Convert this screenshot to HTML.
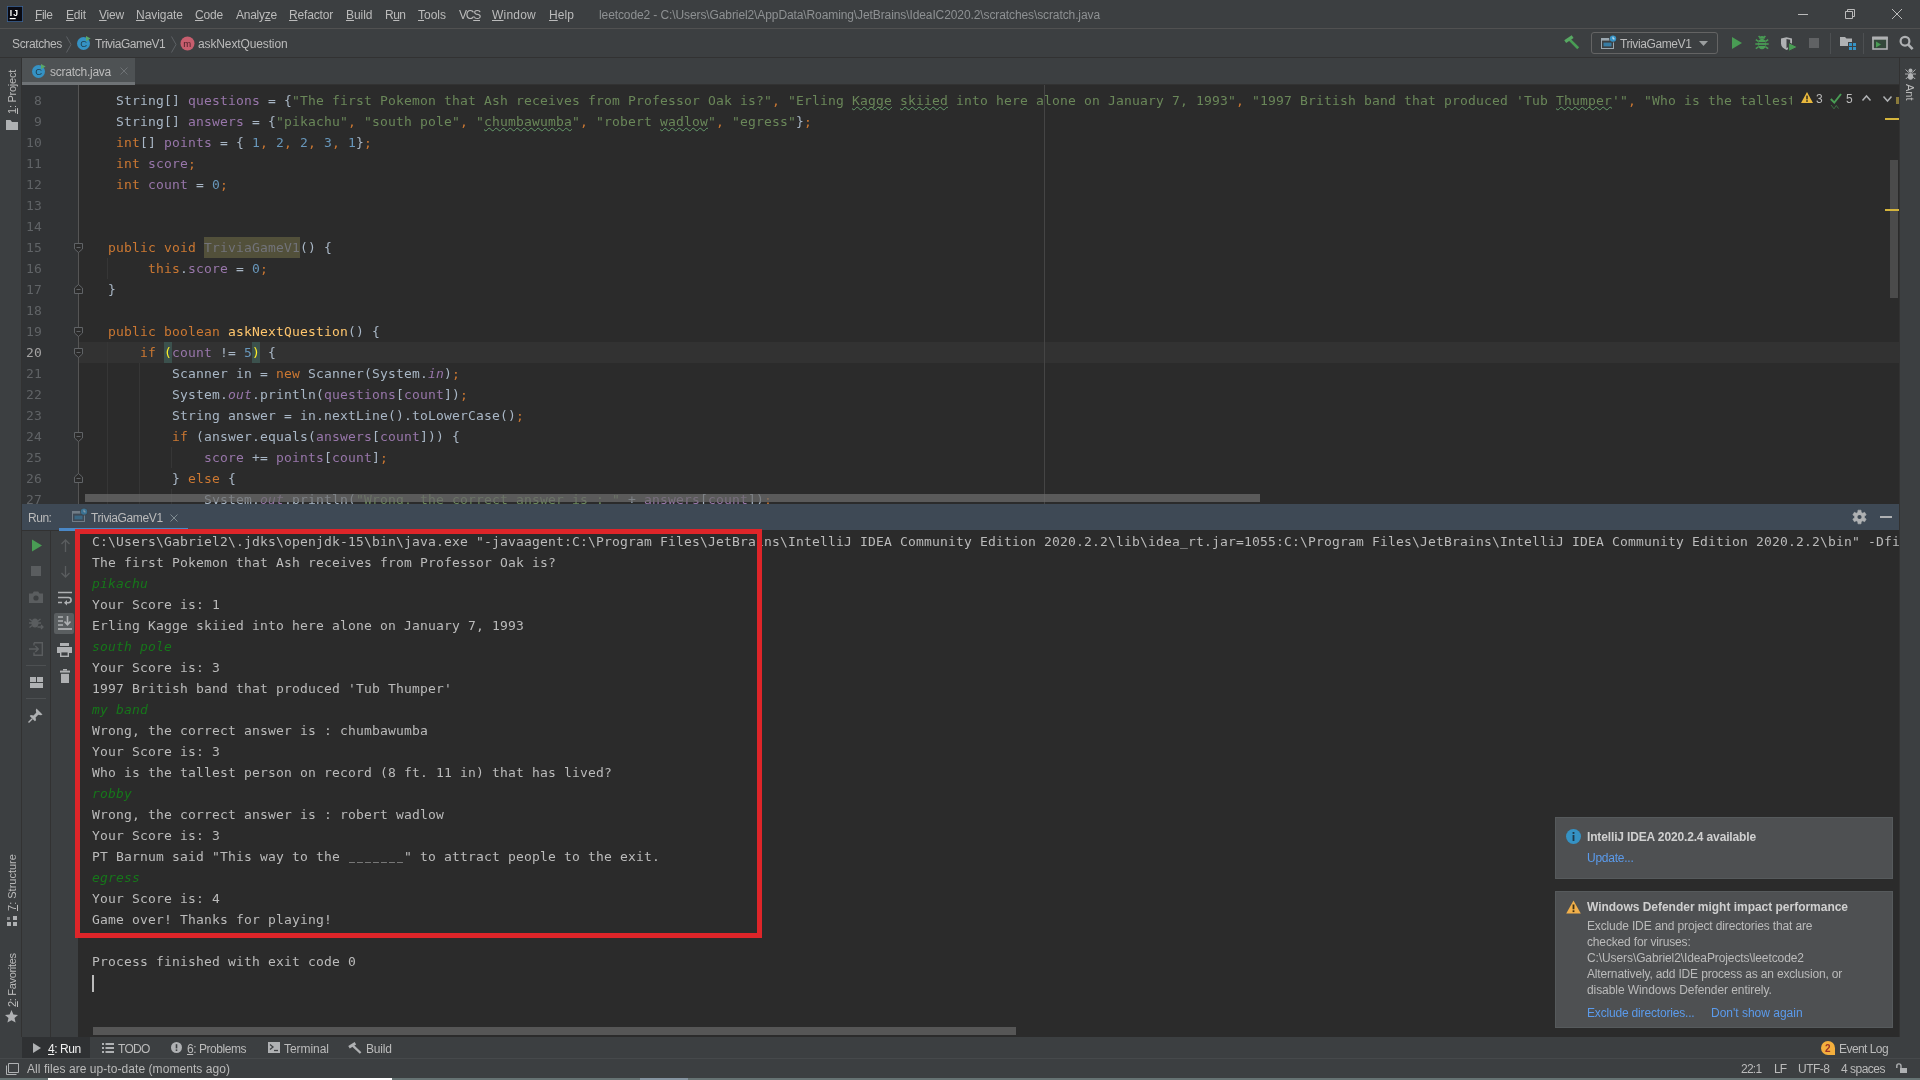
<!DOCTYPE html>
<html lang="en">
<head>
<meta charset="utf-8">
<title>leetcode2 - scratch.java</title>
<style>
*{box-sizing:border-box;margin:0;padding:0}
html,body{width:1920px;height:1080px;overflow:hidden;background:#3c3f41}
body{position:relative;font-family:"Liberation Sans",sans-serif;font-size:12px;color:#bbbbbb;-webkit-font-smoothing:antialiased}
.abs{position:absolute}
.t,.vt,.mono,svg{will-change:transform}
.t{position:absolute;white-space:pre;line-height:16px;height:16px}
u{text-decoration:underline;text-underline-offset:1px}
svg{position:absolute;overflow:visible}
/* ---------- top bars ---------- */
#menubar{position:absolute;left:0;top:0;width:1920px;height:29px;background:#3c3f41;border-bottom:1px solid #515151}
#navbar{position:absolute;left:0;top:29px;width:1920px;height:29px;background:#3c3f41;border-bottom:1px solid #323232}
#menubar .t{top:7px;font-size:12px;color:#bbbbbb}
#navbar .t{top:7px;font-size:12px;color:#bbbbbb}
/* ---------- stripes ---------- */
#lstripe{position:absolute;left:0;top:58px;width:22px;height:979px;background:#3c3f41;border-right:1px solid #323232}
#rstripe{position:absolute;left:1899px;top:58px;width:21px;height:979px;background:#3c3f41;border-left:1px solid #323232}
.vt{position:absolute;white-space:pre;font-size:11px;color:#bbbbbb;transform-origin:0 0;line-height:14px}
/* ---------- editor ---------- */
#tabs{position:absolute;left:22px;top:58px;width:1877px;height:27px;background:#3c3f41;border-bottom:1px solid #323232}
#tab1{position:absolute;left:0;top:0;width:113px;height:27px;background:#4e5254;border-bottom:3px solid #6f7376}
#editor{position:absolute;left:22px;top:85px;width:1877px;height:419px;background:#2b2b2b;overflow:hidden}
#gutter{position:absolute;left:0;top:0;width:57px;height:419px;background:#313335;border-right:1px solid #555555}
.mono{font-family:"DejaVu Sans Mono","Liberation Mono",monospace;font-size:13px;letter-spacing:0.1733px;line-height:21px;white-space:pre}
.ln{position:absolute;left:0;width:20px;text-align:right;color:#606366;height:21px}
.cl{position:absolute;left:54px;height:21px;color:#a9b7c6}
.k{color:#cc7832}.s{color:#6a8759}.n{color:#6897bb}.f{color:#9876aa}.m{color:#ffc66d}.i{color:#9876aa;font-style:italic}
.un{color:#72737a;background:#52503a;display:inline-block;height:21px;vertical-align:top}
.br{color:#ffef28;background:#3b514d;display:inline-block;height:21px;vertical-align:top}
.w{text-decoration-skip-ink:none;text-decoration:underline wavy #659c6b;text-decoration-thickness:1px;text-underline-offset:0.5px}
/* ---------- run panel ---------- */
#runhdr{position:absolute;left:22px;top:504px;width:1877px;height:26px;background:#3e4955}
#runtb1{position:absolute;left:22px;top:530px;width:29px;height:507px;background:#3c3f41;border-right:1px solid #323232}
#runtb2{position:absolute;left:51px;top:530px;width:27px;height:507px;background:#3c3f41}
#console{position:absolute;left:78px;top:530px;width:1821px;height:507px;background:#2b2b2b;overflow:hidden}
.co{position:absolute;left:14px;margin-top:-0.5px;height:21px;color:#bbbbbb}
.us{display:inline-block;width:8px;transform:scaleX(.76) translateY(-1.5px);letter-spacing:0}
.ui{color:#16771a;font-style:italic}
/* ---------- bottom ---------- */
#btabs{position:absolute;left:0;top:1037px;width:1920px;height:21px;background:#3c3f41}
#status{position:absolute;left:0;top:1058px;width:1920px;height:22px;background:#3c3f41;border-top:1px solid #46494b}
#btabs .t{top:4px}
#status .t{top:2px}
/* ---------- notifications ---------- */
.note{position:absolute;background:#4e5052;border:1px solid #565a5c}
.note .t{font-size:12px}
.lnk{color:#5b9bec}
#redbox{z-index:5;position:absolute;left:75px;top:529px;width:687px;height:409px;border:5px solid #de2529}
</style>
</head>
<body>
<div id="menubar">
<svg style="left:7px;top:6px" width="16" height="16" viewBox="0 0 16 16"><rect x="0" y="0" width="16" height="16" fill="#3e6496"/><rect x="0.8" y="0.8" width="14.4" height="14.4" fill="#0a0a12"/><rect x="2.7" y="12" width="6" height="1.2" fill="#fff"/><text x="2.7" y="9.7" font-family="Liberation Sans,sans-serif" font-weight="bold" font-size="8.6" letter-spacing="1.2" fill="#fff">IJ</text></svg>
<span class="t" style="letter-spacing:-0.465px;left:35px"><u>F</u>ile</span>
<span class="t" style="letter-spacing:-0.176px;left:66px"><u>E</u>dit</span>
<span class="t" style="letter-spacing:-0.203px;left:99px"><u>V</u>iew</span>
<span class="t" style="letter-spacing:-0.047px;left:136px"><u>N</u>avigate</span>
<span class="t" style="letter-spacing:-0.176px;left:195px"><u>C</u>ode</span>
<span class="t" style="letter-spacing:-0.246px;left:236px">Analy<u>z</u>e</span>
<span class="t" style="letter-spacing:-0.17px;left:289px"><u>R</u>efactor</span>
<span class="t" style="letter-spacing:-0.041px;left:346px"><u>B</u>uild</span>
<span class="t" style="letter-spacing:-0.516px;left:385px">R<u>u</u>n</span>
<span class="t" style="letter-spacing:-0.003px;left:418px"><u>T</u>ools</span>
<span class="t" style="letter-spacing:-1.229px;left:459px">VC<u>S</u></span>
<span class="t" style="letter-spacing:0.219px;left:492px"><u>W</u>indow</span>
<span class="t" style="letter-spacing:0.078px;left:549px"><u>H</u>elp</span>
<span class="t" id="title" style="letter-spacing:-0.102px;left:599px;color:#8e9193">leetcode2 - C:\Users\Gabriel2\AppData\Roaming\JetBrains\IdeaIC2020.2\scratches\scratch.java</span>
<svg style="left:1798px;top:9px" width="10" height="10" viewBox="0 0 10 10"><path d="M0 5.5H10" stroke="#bbb" stroke-width="1" fill="none"/></svg>
<svg style="left:1845px;top:9px" width="10" height="10" viewBox="0 0 10 10"><path d="M0.5 2.5H7.5V9.5H0.5ZM2.5 2.5V0.5H9.5V7.5H7.5" stroke="#bbb" stroke-width="1" fill="none"/></svg>
<svg style="left:1892px;top:9px" width="10" height="10" viewBox="0 0 10 10"><path d="M0 0L10 10M10 0L0 10" stroke="#bbb" stroke-width="1" fill="none"/></svg>
</div>
<div id="navbar">
<span class="t" style="letter-spacing:-0.373px;left:12px">Scratches</span>
<svg style="left:66px;top:7px" width="6" height="17" viewBox="0 0 6 17"><path d="M0.5 0.5L5 8.5L0.5 16.5" stroke="#5e6265" stroke-width="1" fill="none"/></svg>
<svg style="left:76px;top:6px" width="16" height="16" viewBox="0 0 16 16"><circle cx="7.5" cy="8.5" r="6.5" fill="#3592c4"/><text x="4.2" y="12" font-family="Liberation Sans,sans-serif" font-size="9.5" fill="#1d3a4a">C</text><path d="M10 1L14.6 3.6L10 6.2Z" fill="#59a869"/></svg>
<span class="t" style="letter-spacing:-0.496px;left:95px">TriviaGameV1</span>
<svg style="left:171px;top:7px" width="6" height="17" viewBox="0 0 6 17"><path d="M0.5 0.5L5 8.5L0.5 16.5" stroke="#5e6265" stroke-width="1" fill="none"/></svg>
<svg style="left:180px;top:7px" width="15" height="15" viewBox="0 0 15 15"><circle cx="7.5" cy="7.5" r="7" fill="#c75e6e"/><text x="3.3" y="10.6" font-family="Liberation Sans,sans-serif" font-size="9.5" fill="#4a1e27">m</text></svg>
<span class="t" style="letter-spacing:-0.126px;left:198px">askNextQuestion</span>
<!-- right toolbar -->
<svg style="left:1564px;top:6px" width="16" height="16" viewBox="0 0 16 16"><path d="M5.6 4.6L14.2 13.2" stroke="#499c54" stroke-width="2.7" fill="none"/><path d="M1.2 6.6L8.6 1.6" stroke="#57a862" stroke-width="3.4" fill="none"/></svg>
<div class="abs" style="left:1591px;top:3px;width:127px;height:22px;border:1px solid #646464;border-radius:3px"></div>
<svg style="left:1601px;top:6px" width="17" height="16" viewBox="0 0 17 16"><rect x="0.5" y="3.5" width="12" height="10" fill="none" stroke="#9aa7b0"/><rect x="0" y="3" width="13" height="2.6" fill="#9aa7b0"/><rect x="2.5" y="7.6" width="8" height="3.8" fill="#3592c4" opacity=".75"/><circle cx="12" cy="3.6" r="3.9" fill="#3c3f41"/><circle cx="12" cy="3.6" r="3.2" fill="#3592c4"/><path d="M12 1.7V3.9H13.6" stroke="#e8f2fa" stroke-width="0.9" fill="none"/></svg>
<span class="t" style="letter-spacing:-0.396px;left:1620px">TriviaGameV1</span>
<svg style="left:1699px;top:12px" width="9" height="5" viewBox="0 0 9 5"><path d="M0 0H9L4.5 5Z" fill="#9b9e9f"/></svg>
<svg style="left:1731px;top:7px" width="12" height="14" viewBox="0 0 12 14"><path d="M1 1L11 7L1 13Z" fill="#499c54"/></svg>
<svg style="left:1755px;top:6px" width="14" height="15" viewBox="0 0 14 15"><ellipse cx="7" cy="9" rx="4.2" ry="5.2" fill="#499c54"/><path d="M4.2 3.8A2.8 2.8 0 0 1 9.8 3.8Z" fill="#499c54"/><path d="M0.8 4.6L3.4 6.4M13.2 4.6L10.6 6.4M0.3 9H3M13.7 9H11M0.8 13.6L3.4 11.8M13.2 13.6L10.6 11.8M3.6 1L5 2.6M10.4 1L9 2.6" stroke="#499c54" stroke-width="1.5" fill="none"/><path d="M3.5 7.6H10.5M3.5 10.4H10.5" stroke="#3c3f41" stroke-width="1"/></svg>
<svg style="left:1780px;top:8px" width="18" height="15" viewBox="0 0 18 15"><path d="M1 1.6L6.5 0.3L12 1.6V6.5C12 9.6 9.5 11.6 6.5 13C3.5 11.6 1 9.6 1 6.5Z" fill="#afb1b3"/><path d="M6.5 1.9L10.2 2.8V6.5C10.2 8.6 8.6 10.2 6.5 11.2Z" fill="#3c3f41"/><path d="M8.6 5.6L17.6 10L8.6 14.4Z" fill="#499c54" stroke="#3c3f41" stroke-width="1"/></svg>
<div class="abs" style="left:1809px;top:9px;width:10px;height:10px;background:#606264"></div>
<div class="abs" style="left:1830px;top:4px;width:1px;height:21px;background:#4d5052"></div>
<svg style="left:1840px;top:7px" width="17" height="15" viewBox="0 0 17 15"><path d="M0 1H5L6.5 2.5H12V10H0Z" fill="#afb1b3"/><rect x="8" y="6" width="8" height="8" fill="#3c3f41"/><rect x="9" y="7" width="3" height="3" fill="#3592c4"/><rect x="13" y="7" width="3" height="3" fill="#3592c4"/><rect x="9" y="11" width="3" height="3" fill="#3592c4"/><rect x="13" y="11" width="3" height="3" fill="#3592c4"/></svg>
<div class="abs" style="left:1863px;top:4px;width:1px;height:21px;background:#4d5052"></div>
<svg style="left:1872px;top:7px" width="16" height="14" viewBox="0 0 16 14"><rect x="1" y="1.5" width="14" height="11.5" fill="#33473a" stroke="#afb1b3" stroke-width="1.6"/><rect x="0.2" y="0.7" width="15.6" height="3" fill="#afb1b3"/><path d="M4 5.5L9 8.5L4 11.5Z" fill="#499c54"/></svg>
<svg style="left:1899px;top:6px" width="15" height="16" viewBox="0 0 15 16"><circle cx="6" cy="6.2" r="4.4" fill="none" stroke="#afb1b3" stroke-width="2.2"/><path d="M9.3 9.6L13.6 14.2" stroke="#afb1b3" stroke-width="2.6" fill="none"/></svg>
</div>
<div id="lstripe">
<span class="vt" id="vt1" style="left:5px;top:56px;letter-spacing:-0.25px;transform:rotate(-90deg)"><u>1</u>: Project</span>
<svg style="left:6px;top:62px" width="12" height="10" viewBox="0 0 12 10"><path d="M0 0H4.5L6 2H12V10H0Z" fill="#afb1b3"/></svg>
<span class="vt" id="vt7" style="left:5px;top:853px;transform:rotate(-90deg)"><u>7</u>: Structure</span>
<svg style="left:7px;top:858px" width="10" height="10" viewBox="0 0 10 10"><rect x="0" y="6" width="4" height="4" fill="#afb1b3"/><rect x="6" y="6" width="4" height="4" fill="#afb1b3"/><rect x="6" y="0" width="4" height="4" fill="#afb1b3"/><rect x="0" y="1" width="3" height="3" fill="#afb1b3" opacity=".6"/></svg>
<span class="vt" id="vt2" style="left:5px;top:949px;letter-spacing:-0.32px;transform:rotate(-90deg)"><u>2</u>: Favorites</span>
<svg style="left:5px;top:952px" width="13" height="13" viewBox="0 0 13 13"><path d="M6.5 0L8.4 4.4L13 4.9L9.5 8L10.6 12.6L6.5 10.2L2.4 12.6L3.5 8L0 4.9L4.6 4.4Z" fill="#afb1b3"/></svg>
</div>
<div id="rstripe">
<svg style="left:5px;top:10px" width="11" height="12" viewBox="0 0 11 12"><ellipse cx="5.5" cy="2.6" rx="2" ry="2.2" fill="#afb1b3"/><ellipse cx="5.5" cy="8.4" rx="2.6" ry="3.3" fill="#afb1b3"/><path d="M0.5 1.5L3.8 4.6M10.5 1.5L7.2 4.6M0 6H3.5M11 6H7.5M0.8 11L3.6 8.2M10.2 11L7.4 8.2" stroke="#afb1b3" stroke-width="1" fill="none"/></svg>
<span class="vt" id="vtant" style="left:17px;top:26px;transform:rotate(90deg)">Ant</span>
</div>
<div id="tabs"><div id="tab1">
<svg style="left:9px;top:5px" width="16" height="16" viewBox="0 0 16 16"><circle cx="7.5" cy="8.5" r="6.5" fill="#3592c4"/><text x="4.2" y="12" font-family="Liberation Sans,sans-serif" font-size="9.5" fill="#1d3a4a">C</text><path d="M10 1L14.6 3.6L10 6.2Z" fill="#59a869"/></svg>
<span class="t" style="letter-spacing:-0.253px;left:28px;top:6px;color:#bbbbbb">scratch.java</span>
<svg style="left:98px;top:9px" width="8" height="8" viewBox="0 0 8 8"><path d="M0.5 0.5L7.5 7.5M7.5 0.5L0.5 7.5" stroke="#6e7275" stroke-width="1" fill="none"/></svg>
</div></div>
<div id="editor">
<div class="abs" style="left:0;top:257px;width:1877px;height:21px;background:#323232"></div>
<div class="abs" style="left:1022px;top:0;width:1px;height:419px;background:#454545"></div>
<div class="abs" style="left:85px;top:173px;width:1px;height:21px;background:#363636"></div>
<div class="abs" style="left:85px;top:257px;width:1px;height:168px;background:#363636"></div>
<div class="abs" style="left:117px;top:278px;width:1px;height:147px;background:#363636"></div>
<div class="abs" style="left:149px;top:362px;width:1px;height:21px;background:#363636"></div>
<div class="abs" style="left:149px;top:404px;width:1px;height:21px;background:#363636"></div>
<div id="gutter">
<span class="ln mono" style="top:5px">8</span>
<span class="ln mono" style="top:26px">9</span>
<span class="ln mono" style="top:47px">10</span>
<span class="ln mono" style="top:68px">11</span>
<span class="ln mono" style="top:89px">12</span>
<span class="ln mono" style="top:110px">13</span>
<span class="ln mono" style="top:131px">14</span>
<span class="ln mono" style="top:152px">15</span>
<span class="ln mono" style="top:173px">16</span>
<span class="ln mono" style="top:194px">17</span>
<span class="ln mono" style="top:215px">18</span>
<span class="ln mono" style="top:236px">19</span>
<span class="ln mono" style="top:257px;color:#a4a3a3">20</span>
<span class="ln mono" style="top:278px">21</span>
<span class="ln mono" style="top:299px">22</span>
<span class="ln mono" style="top:320px">23</span>
<span class="ln mono" style="top:341px">24</span>
<span class="ln mono" style="top:362px">25</span>
<span class="ln mono" style="top:383px">26</span>
<span class="ln mono" style="top:404px">27</span>
</div>
<div class="cl mono" style="top:5px;width:1716px;overflow:hidden">     String[] <span class="f">questions</span> = {<span class="s">"The first Pokemon that Ash receives from Professor Oak is?"</span><span class="k">, </span><span class="s">"Erling <span class="w">Kagge</span> <span class="w">skiied</span> into here alone on January 7, 1993"</span><span class="k">, </span><span class="s">"1997 British band that produced 'Tub <span class="w">Thumper</span>'"</span><span class="k">, </span><span class="s">"Who is the tallest person on record (8 ft. 11 in) that has lived?"</span><span class="k">, </span><span class="s">"PT Barnum said \"This way to the _______\" to attract people to the exit."</span>}<span class="k">;</span></div>
<div class="cl mono" style="top:26px">     String[] <span class="f">answers</span> = {<span class="s">"pikachu"</span><span class="k">, </span><span class="s">"south pole"</span><span class="k">, </span><span class="s">"<span class="w">chumbawumba</span>"</span><span class="k">, </span><span class="s">"robert <span class="w">wadlow</span>"</span><span class="k">, </span><span class="s">"egress"</span>}<span class="k">;</span></div>
<div class="cl mono" style="top:47px">     <span class="k">int</span>[] <span class="f">points</span> = { <span class="n">1</span><span class="k">, </span><span class="n">2</span><span class="k">, </span><span class="n">2</span><span class="k">, </span><span class="n">3</span><span class="k">, </span><span class="n">1</span>}<span class="k">;</span></div>
<div class="cl mono" style="top:68px">     <span class="k">int </span><span class="f">score</span><span class="k">;</span></div>
<div class="cl mono" style="top:89px">     <span class="k">int </span><span class="f">count</span> = <span class="n">0</span><span class="k">;</span></div>
<div class="cl mono" style="top:152px">    <span class="k">public void </span><span class="un">TriviaGameV1</span>() {</div>
<div class="cl mono" style="top:173px">         <span class="k">this</span>.<span class="f">score</span> = <span class="n">0</span><span class="k">;</span></div>
<div class="cl mono" style="top:194px">    }</div>
<div class="cl mono" style="top:236px">    <span class="k">public boolean </span><span class="m">askNextQuestion</span>() {</div>
<div class="cl mono" style="top:257px">        <span class="k">if </span><span class="br">(</span><span class="f">count</span> != <span class="n">5</span><span class="br">)</span> {</div>
<div class="cl mono" style="top:278px">            Scanner in = <span class="k">new </span>Scanner(System.<span class="i">in</span>)<span class="k">;</span></div>
<div class="cl mono" style="top:299px">            System.<span class="i">out</span>.println(<span class="f">questions</span>[<span class="f">count</span>])<span class="k">;</span></div>
<div class="cl mono" style="top:320px">            String answer = in.nextLine().toLowerCase()<span class="k">;</span></div>
<div class="cl mono" style="top:341px">            <span class="k">if </span>(answer.equals(<span class="f">answers</span>[<span class="f">count</span>])) {</div>
<div class="cl mono" style="top:362px">                <span class="f">score</span> += <span class="f">points</span>[<span class="f">count</span>]<span class="k">;</span></div>
<div class="cl mono" style="top:383px">            } <span class="k">else </span>{</div>
<div class="cl mono" style="top:404px">                System.<span class="i">out</span>.println(<span class="s">"Wrong, the correct answer is : "</span> + <span class="f">answers</span>[<span class="f">count</span>])<span class="k">;</span></div>
<svg style="left:52px;top:158px" width="9" height="10" viewBox="0 0 9 10"><path d="M0.5 0.5H8.5V6L4.5 9.5L0.5 6Z" fill="#2b2b2b" stroke="#606366"/><path d="M2.5 4.5H6.5" stroke="#606366"/></svg>
<svg style="left:52px;top:199px" width="9" height="10" viewBox="0 0 9 10"><path d="M0.5 9.5H8.5V4L4.5 0.5L0.5 4Z" fill="#2b2b2b" stroke="#606366"/><path d="M2.5 5.5H6.5" stroke="#606366"/></svg>
<svg style="left:52px;top:242px" width="9" height="10" viewBox="0 0 9 10"><path d="M0.5 0.5H8.5V6L4.5 9.5L0.5 6Z" fill="#2b2b2b" stroke="#606366"/><path d="M2.5 4.5H6.5" stroke="#606366"/></svg>
<svg style="left:52px;top:263px" width="9" height="10" viewBox="0 0 9 10"><path d="M0.5 0.5H8.5V6L4.5 9.5L0.5 6Z" fill="#2b2b2b" stroke="#606366"/><path d="M2.5 4.5H6.5" stroke="#606366"/></svg>
<svg style="left:52px;top:347px" width="9" height="10" viewBox="0 0 9 10"><path d="M0.5 0.5H8.5V6L4.5 9.5L0.5 6Z" fill="#2b2b2b" stroke="#606366"/><path d="M2.5 4.5H6.5" stroke="#606366"/></svg>
<svg style="left:52px;top:388px" width="9" height="10" viewBox="0 0 9 10"><path d="M0.5 9.5H8.5V4L4.5 0.5L0.5 4Z" fill="#2b2b2b" stroke="#606366"/><path d="M2.5 5.5H6.5" stroke="#606366"/></svg>
<div class="abs" style="left:1771px;top:2px;width:97px;height:24px;background:#2b2b2b"></div>
<svg style="left:1779px;top:7px" width="12" height="11" viewBox="0 0 12 11"><path d="M6 0L12 11H0Z" fill="#e8b83d"/><rect x="5.2" y="3.6" width="1.6" height="3.8" fill="#3a3320"/><rect x="5.2" y="8.2" width="1.6" height="1.6" fill="#3a3320"/></svg>
<span class="t" style="left:1794px;top:6px;color:#bbbbbb">3</span>
<svg style="left:1808px;top:8px" width="12" height="17" viewBox="0 0 12 17"><path d="M0.8 6L4.3 9.6L11 1" stroke="#499c54" stroke-width="2" fill="none"/><path d="M1 12L4 15.8L6.3 12.5L8.5 15.5" stroke="#499c54" stroke-width="0.8" fill="none" opacity=".75"/></svg>
<span class="t" style="left:1824px;top:6px;color:#bbbbbb">5</span>
<svg style="left:1840px;top:10px" width="9" height="6" viewBox="0 0 9 6"><path d="M0.5 5.5L4.5 1L8.5 5.5" stroke="#afb1b3" stroke-width="1.5" fill="none"/></svg>
<svg style="left:1861px;top:11px" width="9" height="6" viewBox="0 0 9 6"><path d="M0.5 0.5L4.5 5L8.5 0.5" stroke="#afb1b3" stroke-width="1.5" fill="none"/></svg>
<div class="abs" style="left:1868px;top:75px;width:8px;height:138px;background:#4b4b4b"></div>
<div class="abs" style="left:1874px;top:12px;width:3px;height:7px;background:#8a7a3a"></div>
<div class="abs" style="left:1863px;top:33px;width:14px;height:2px;background:#d4b43c"></div>
<div class="abs" style="left:1863px;top:124px;width:14px;height:2px;background:#d4b43c"></div>
<div class="abs" style="left:63px;top:409px;width:1175px;height:8px;background:rgba(108,108,108,.72)"></div>
</div>
<div id="runhdr">
<span class="t" style="letter-spacing:-0.465px;left:6px;top:6px">Run:</span>
<svg style="left:50px;top:4px;opacity:.55" width="17" height="16" viewBox="0 0 17 16"><rect x="0.5" y="3.5" width="12" height="10" fill="none" stroke="#9aa7b0"/><rect x="0" y="3" width="13" height="2.6" fill="#9aa7b0"/><rect x="2.5" y="7.6" width="8" height="3.8" fill="#3592c4" opacity=".75"/><circle cx="12" cy="3.6" r="3.9" fill="#3c3f41"/><circle cx="12" cy="3.6" r="3.2" fill="#3592c4"/><path d="M12 1.7V3.9H13.6" stroke="#e8f2fa" stroke-width="0.9" fill="none"/></svg>
<span class="t" style="letter-spacing:-0.379px;left:69px;top:6px">TriviaGameV1</span>
<svg style="left:148px;top:10px" width="8" height="8" viewBox="0 0 8 8"><path d="M0.5 0.5L7.5 7.5M7.5 0.5L0.5 7.5" stroke="#7f8b91" stroke-width="1" fill="none"/></svg>
<div class="abs" style="left:37px;top:24px;width:129px;height:3px;background:#4a88c7;z-index:3"></div>
<svg style="left:1831px;top:6px" width="13" height="14" viewBox="0 0 13 14"><path d="M4.97 0.17L8.03 0.17L8.19 2.30L9.73 3.18L11.65 2.26L13.18 4.91L11.42 6.11L11.42 7.89L13.18 9.09L11.65 11.74L9.73 10.82L8.19 11.70L8.03 13.83L4.97 13.83L4.81 11.70L3.27 10.82L1.35 11.74L-0.18 9.09L1.58 7.89L1.58 6.11L-0.18 4.91L1.35 2.26L3.27 3.18L4.81 2.30Z" fill="#afb1b3" stroke="#afb1b3" stroke-width="0.6" stroke-linejoin="round"/><circle cx="6.5" cy="7" r="2.1" fill="#3e4955"/></svg>
<div class="abs" style="left:1858px;top:12px;width:12px;height:2px;background:#afb1b3"></div>
</div>
<div class="abs" style="left:22px;top:530px;width:56px;height:1px;background:#323232;z-index:2"></div>
<div id="runtb1">
<svg style="left:9px;top:9px" width="12" height="13" viewBox="0 0 12 13"><path d="M1 0.5L11 6.5L1 12.5Z" fill="#499c54"/></svg>
<div class="abs" style="left:9px;top:36px;width:10px;height:10px;background:#5a5d5f"></div>
<svg style="left:7px;top:61px" width="14" height="12" viewBox="0 0 14 12"><path d="M0 2.5H3.5L4.8 0.5H9.2L10.5 2.5H14V12H0Z" fill="#5a5d5f"/><circle cx="7" cy="7" r="2.6" fill="#3c3f41"/></svg>
<svg style="left:7px;top:86px" width="15" height="15" viewBox="0 0 15 15"><ellipse cx="6" cy="7" rx="3.6" ry="4.6" fill="#5a5d5f"/><path d="M0.5 3L3 5M11.5 3L9 5M0 7H3M12 7H9M0.5 11.5L3 9.5" stroke="#5a5d5f" stroke-width="1.3" fill="none"/><path d="M8.5 11H14M12 9L14 11L12 13" stroke="#5a5d5f" stroke-width="1.3" fill="none"/></svg>
<svg style="left:7px;top:112px" width="14" height="14" viewBox="0 0 14 14"><path d="M5 0.7H13.3V13.3H5V10.5M5 3.5V0.7" stroke="#5a5d5f" stroke-width="1.4" fill="none"/><path d="M0 7H9M6.3 4L9.3 7L6.3 10" stroke="#5a5d5f" stroke-width="1.4" fill="none"/></svg>
<div class="abs" style="left:4px;top:135px;width:20px;height:1px;background:#4d5052"></div>
<svg style="left:8px;top:147px" width="13" height="11" viewBox="0 0 13 11"><rect x="0" y="0" width="6" height="5" fill="#afb1b3"/><rect x="7" y="0" width="6" height="5" fill="#afb1b3"/><rect x="0" y="6" width="13" height="5" fill="#afb1b3"/></svg>
<div class="abs" style="left:4px;top:168px;width:20px;height:1px;background:#4d5052"></div>
<svg style="left:6px;top:178px" width="15" height="15" viewBox="0 0 15 15"><path d="M8.5 0.5L14.5 6.5L13 7.2L10.3 6.8L7.6 9.5L8 12.2L6.9 13.3L1.7 8.1L2.8 7L5.5 7.4L8.2 4.7L7.8 2Z" fill="#afb1b3"/><path d="M4.3 10.7L0.5 14.5" stroke="#afb1b3" stroke-width="1.4"/></svg>
</div>
<div id="runtb2">
<svg style="left:10px;top:9px" width="9" height="13" viewBox="0 0 9 13"><path d="M4.5 13V1M0.5 5L4.5 1L8.5 5" stroke="#5a5d5f" stroke-width="1.3" fill="none"/></svg>
<svg style="left:10px;top:36px" width="9" height="12" viewBox="0 0 9 12"><path d="M4.5 0V11M0.5 7L4.5 11L8.5 7" stroke="#5a5d5f" stroke-width="1.3" fill="none"/></svg>
<svg style="left:7px;top:61px" width="14" height="14" viewBox="0 0 14 14"><path d="M0 1.5H14M0 6.5H10.5A2.6 2.6 0 0 1 10.5 11.7H7M0 11.5H4" stroke="#afb1b3" stroke-width="1.6" fill="none"/><path d="M9 9L6 11.7L9 14.4Z" fill="#afb1b3"/></svg>
<div class="abs" style="left:3px;top:83px;width:20px;height:21px;background:#5a5e60;border-radius:2px"></div>
<svg style="left:7px;top:86px" width="14" height="14" viewBox="0 0 14 14"><path d="M0 1H5M0 5H5M0 9H5" stroke="#afb1b3" stroke-width="1.6"/><path d="M9.5 0V8M6.5 5.5L9.5 8.8L12.5 5.5" stroke="#afb1b3" stroke-width="1.6" fill="none"/><path d="M0 13H14" stroke="#afb1b3" stroke-width="1.8"/></svg>
<svg style="left:6px;top:113px" width="15" height="14" viewBox="0 0 15 14"><rect x="3" y="0" width="9" height="3" fill="#afb1b3"/><rect x="0" y="4" width="15" height="6" fill="#afb1b3"/><rect x="3.7" y="8.7" width="7.6" height="4.6" fill="#3c3f41" stroke="#afb1b3" stroke-width="1.4"/></svg>
<svg style="left:9px;top:139px" width="10" height="14" viewBox="0 0 10 14"><rect x="3" y="0" width="4" height="1.6" fill="#afb1b3"/><rect x="0" y="1.6" width="10" height="2" fill="#afb1b3"/><path d="M1 4.8H9V14H1Z" fill="#afb1b3"/></svg>
</div>
<div id="console">
<div class="co mono" style="top:1px">C:\Users\Gabriel2\.jdks\openjdk-15\bin\java.exe "-javaagent:C:\Program Files\JetBrains\IntelliJ IDEA Community Edition 2020.2.2\lib\idea_rt.jar=1055:C:\Program Files\JetBrains\IntelliJ IDEA Community Edition 2020.2.2\bin" -Dfile.encoding=UTF-8</div>
<div class="co mono" style="top:22px">The first Pokemon that Ash receives from Professor Oak is?</div>
<div class="co mono ui" style="top:43px">pikachu</div>
<div class="co mono" style="top:64px">Your Score is: 1</div>
<div class="co mono" style="top:85px">Erling Kagge skiied into here alone on January 7, 1993</div>
<div class="co mono ui" style="top:106px">south pole</div>
<div class="co mono" style="top:127px">Your Score is: 3</div>
<div class="co mono" style="top:148px">1997 British band that produced 'Tub Thumper'</div>
<div class="co mono ui" style="top:169px">my band</div>
<div class="co mono" style="top:190px">Wrong, the correct answer is : chumbawumba</div>
<div class="co mono" style="top:211px">Your Score is: 3</div>
<div class="co mono" style="top:232px">Who is the tallest person on record (8 ft. 11 in) that has lived?</div>
<div class="co mono ui" style="top:253px">robby</div>
<div class="co mono" style="top:274px">Wrong, the correct answer is : robert wadlow</div>
<div class="co mono" style="top:295px">Your Score is: 3</div>
<div class="co mono" style="top:316px">PT Barnum said "This way to the <span class="us">_</span><span class="us">_</span><span class="us">_</span><span class="us">_</span><span class="us">_</span><span class="us">_</span><span class="us">_</span>" to attract people to the exit.</div>
<div class="co mono ui" style="top:337px">egress</div>
<div class="co mono" style="top:358px">Your Score is: 4</div>
<div class="co mono" style="top:379px">Game over! Thanks for playing!</div>
<div class="co mono" style="top:421px">Process finished with exit code 0</div>
<div class="abs" style="left:14px;top:445px;width:2px;height:17px;background:#bbbbbb"></div>
<div class="abs" style="left:15px;top:497px;width:923px;height:8px;background:#565656"></div>
</div>
<div id="btabs">
<div class="abs" style="left:22px;top:0;width:68px;height:21px;background:#2f3133"></div>
<svg style="left:33px;top:6px" width="8" height="10" viewBox="0 0 8 10"><path d="M0 0L8 5L0 10Z" fill="#afb1b3"/></svg>
<span class="t" style="letter-spacing:-0.446px;left:48px;color:#f0f0f0"><u>4</u>: Run</span>
<svg style="left:102px;top:6px" width="12" height="10" viewBox="0 0 12 10"><path d="M0 1H2M0 5H2M0 9H2M3.5 1H12M3.5 5H12M3.5 9H12" stroke="#afb1b3" stroke-width="1.8"/></svg>
<span class="t" style="letter-spacing:-0.688px;left:118px">TODO</span>
<svg style="left:171px;top:5px" width="11" height="11" viewBox="0 0 11 11"><circle cx="5.5" cy="5.5" r="5.5" fill="#afb1b3"/><rect x="4.7" y="2.2" width="1.6" height="4.2" fill="#3c3f41"/><rect x="4.7" y="7.4" width="1.6" height="1.6" fill="#3c3f41"/></svg>
<span class="t" style="letter-spacing:-0.459px;left:187px"><u>6</u>: Problems</span>
<svg style="left:268px;top:5px" width="12" height="11" viewBox="0 0 12 11"><rect x="0" y="0" width="12" height="11" fill="#afb1b3"/><path d="M2 2.5L5 5L2 7.5" stroke="#3c3f41" stroke-width="1.3" fill="none"/><path d="M6 8.5H10" stroke="#3c3f41" stroke-width="1.3"/></svg>
<span class="t" style="letter-spacing:-0.045px;left:284px">Terminal</span>
<svg style="left:348px;top:5px" width="14" height="12" viewBox="0 0 14 12"><path d="M4.8 3.6L12.6 11" stroke="#afb1b3" stroke-width="2.3" fill="none"/><path d="M1 5.2L7.4 1.2" stroke="#afb1b3" stroke-width="2.8" fill="none"/></svg>
<span class="t" style="letter-spacing:-0.198px;left:366px">Build</span>
<svg style="left:1821px;top:4px" width="14" height="14" viewBox="0 0 14 14"><path d="M7 0A7 7 0 0 1 14 7V14H7A7 7 0 0 1 7 0Z" fill="#f4af3d"/><text x="4.1" y="10.6" font-family="Liberation Sans,sans-serif" font-weight="bold" font-size="10" fill="#9c3326">2</text></svg>
<span class="t" style="letter-spacing:-0.561px;left:1839px">Event Log</span>
</div>
<div id="status">
<svg style="left:5px;top:4px" width="14" height="13" viewBox="0 0 14 13"><path d="M3.5 0.5H13.5V9.5H3.5Z" fill="none" stroke="#afb1b3"/><path d="M1.5 2.5V11.5H11.5" fill="none" stroke="#afb1b3"/></svg>
<span class="t" style="letter-spacing:0.059px;left:27px">All files are up-to-date (moments ago)</span>
<span class="t" style="letter-spacing:-0.765px;left:1741px">22:1</span>
<span class="t" style="letter-spacing:-1.008px;left:1774px">LF</span>
<span class="t" style="letter-spacing:-0.54px;left:1798px">UTF-8</span>
<span class="t" style="letter-spacing:-0.504px;left:1841px">4 spaces</span>
<svg style="left:1896px;top:4px" width="11" height="10" viewBox="0 0 11 10"><rect x="4" y="5" width="7" height="5" fill="#afb1b3"/><path d="M0.8 5V3A2.1 2.1 0 0 1 5 3V5" stroke="#afb1b3" stroke-width="1.4" fill="none"/></svg>
<div class="abs" style="left:0;top:19px;width:1920px;height:2px;background:#667373"></div>
<div class="abs" style="left:48px;top:19px;width:344px;height:2px;background:#ffffff"></div>
<div class="abs" style="left:640px;top:19px;width:48px;height:2px;background:#8594a0"></div>
</div>
<div id="notes">
<div class="note" style="left:1555px;top:817px;width:338px;height:62px">
<svg style="left:10px;top:11px" width="15" height="15" viewBox="0 0 15 15"><circle cx="7.5" cy="7.5" r="7.5" fill="#3592c4"/><rect x="6.6" y="6" width="1.8" height="6" fill="#1e3a4c"/><rect x="6.6" y="3" width="1.8" height="1.9" fill="#1e3a4c"/></svg>
<span class="t" style="letter-spacing:-0.146px;left:31px;top:11px;font-weight:bold;color:#d0d0d0">IntelliJ IDEA 2020.2.4 available</span>
<span class="t lnk" style="letter-spacing:-0.245px;left:31px;top:32px">Update...</span>
</div>
<div class="note" style="left:1555px;top:891px;width:338px;height:137px">
<svg style="left:10px;top:8px" width="15" height="14" viewBox="0 0 15 14"><path d="M7.5 0.5L14.8 13.5H0.2Z" fill="#f2b04a"/><rect x="6.6" y="4.5" width="1.8" height="4.8" fill="#3e2f10"/><rect x="6.6" y="10.3" width="1.8" height="1.8" fill="#3e2f10"/></svg>
<span class="t" style="letter-spacing:-0.023px;left:31px;top:7px;font-weight:bold;color:#d0d0d0">Windows Defender might impact performance</span>
<span class="t" style="letter-spacing:-0.138px;left:31px;top:26px">Exclude IDE and project directories that are</span>
<span class="t" style="letter-spacing:-0.156px;left:31px;top:42px">checked for viruses:</span>
<span class="t" style="letter-spacing:-0.097px;left:31px;top:58px">C:\Users\Gabriel2\IdeaProjects\leetcode2</span>
<span class="t" style="letter-spacing:-0.161px;left:31px;top:74px">Alternatively, add IDE process as an exclusion, or</span>
<span class="t" style="letter-spacing:-0.074px;left:31px;top:90px">disable Windows Defender entirely.</span>
<span class="t lnk" style="letter-spacing:-0.177px;left:31px;top:113px">Exclude directories...</span>
<span class="t lnk" style="letter-spacing:-0.005px;left:155px;top:113px">Don't show again</span>
</div>
</div>
<div id="redbox"></div>
</body>
</html>
